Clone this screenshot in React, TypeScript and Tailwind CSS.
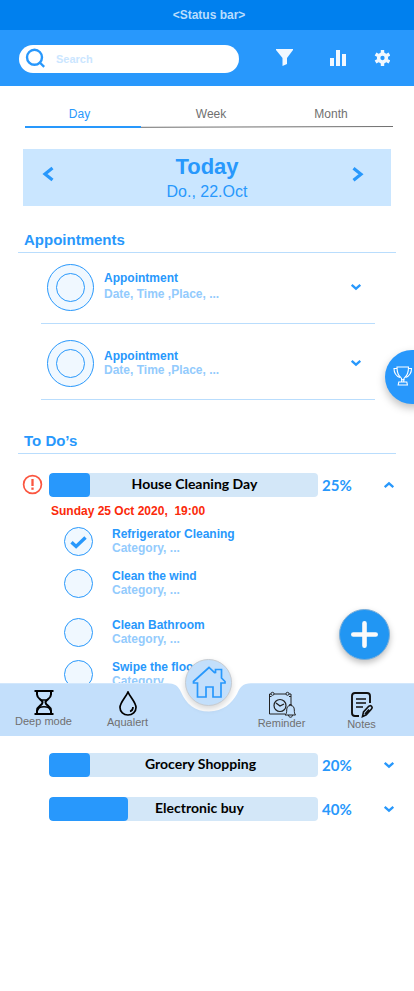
import React from "react";

const sans = "font-['Liberation_Sans',Arial,sans-serif]";
const lato = "font-['Lato',sans-serif]";

function Chevron({ dir, className = "" }: { dir: "up" | "down"; className?: string }) {
  return (
    <svg width="12" height="8" viewBox="0 0 12 8" fill="none" stroke="#2898fc" strokeWidth="2.3" className={className}>
      <path d={dir === "down" ? "M1.7 1.8 6 5.7 10.3 1.8" : "M1.7 6.2 6 2.3 10.3 6.2"} />
    </svg>
  );
}

function BannerArrow({ flip = false }: { flip?: boolean }) {
  return (
    <svg className="-mt-[7px]" width="12" height="16" viewBox="0 0 12 16" fill="none" stroke="#2898fc" strokeWidth="3.200">
      <path d={flip ? "M1.5 2.300 9 8.300 1.5 14.300" : "M10.500 2 3 8 10.500 14"} />
    </svg>
  );
}

function TrophyIcon() {
  return (
    <svg width="20" height="20" viewBox="0 0 20 20" fill="none" stroke="#fff" strokeWidth="1.100">
      <path d="M4 1h11.500c0 5-.8 8.200-3.700 10.400-.8.600-1 1.200-1 2.300H8.700c0-1.100-.1-1.700-1-2.300C4.800 9.200 4 6 4 1Z" />
      <path d="M4 2.500H1c0 4.200 1.800 7.400 6 9M15.500 2.500h3c0 4.200-1.800 7.400-6 9" />
      <path d="M8.700 13v3M10.800 13v3M5.800 16h8l.6 3H5.200Z" />
    </svg>
  );
}

function Header() {
  return (
    <header className="flex h-14 bg-[#2898fc] pl-[19px] pt-[15px]">
      <div className="flex h-7 w-[220px] items-center rounded-full bg-white pl-[6px]">
        <svg className="-mt-px" width="21" height="21" viewBox="0 0 21 21" fill="none" stroke="#2898fc" strokeWidth="2.400">
          <circle cx="9.500" cy="9.300" r="7.500" />
          <path d="m14.700 14.500 4.500 4.300" />
        </svg>
        <span className="ml-[10px] text-[11px] font-bold text-[#cbe6ff]">Search</span>
      </div>
      <svg className="ml-[37px] mt-1" width="17" height="18" viewBox="0 0 17 18" fill="#f1f8ff">
        <path d="M0 0h17v1l-6 8v6l-4.500 2V9L0 1Z" />
      </svg>
      <svg className="ml-[37px] mt-1" width="16" height="18" viewBox="0 0 16 18" fill="#f1f8ff">
        <path d="M0 9h4v8H0ZM6 1h4v16H6ZM12 5h4v12h-4Z" />
      </svg>
      <svg className="ml-[28px] mt-[5px]" width="16" height="16" viewBox="0 0 16 16" fill="none" stroke="#f1f8ff">
        <circle cx="8.500" cy="8" r="3.900" strokeWidth="3.500" />
        <g strokeWidth="3.400">
          <path d="M8.500 3V0M8.500 13v3" />
          <path transform="rotate(60 8.500 8)" d="M8.500 3V0M8.500 13v3" />
          <path transform="rotate(120 8.500 8)" d="M8.500 3V0M8.500 13v3" />
        </g>
      </svg>
    </header>
  );
}

function Tabs() {
  return (
    <nav className="ml-[25px] h-[63px] w-[368px] pt-5 text-xs leading-4 text-[#707070]">
      <div className="flex h-5">
        <span className="w-[109px] text-center text-[#2898fc]">Day</span>
        <span className="ml-10 w-[74px] text-center">Week</span>
        <span className="ml-[46px] w-[74px] text-center">Month</span>
      </div>
      <div className="flex h-[2px]">
        <div className="w-[116px] bg-[#2898fc]" />
        <svg width="252" height="2" viewBox="0 0 252 2">
          <path d="M0 1.300 252 .5" stroke="#707070" strokeWidth="1" />
        </svg>
      </div>
    </nav>
  );
}

function Appointment({ className, textClass, detailClass }: { className: string; textClass: string; detailClass: string }) {
  return (
    <div className={`ml-[41px] flex w-[334px] border-b border-[#b9ddfd] pl-[6px] ${className}`}>
      <div className="flex size-[47px] items-center justify-center rounded-full border border-[#2898fc] bg-[#f0f8ff]">
        <div className="size-[29px] rounded-full border border-[#2898fc]" />
      </div>
      <div className={`ml-[10px] w-[242px] text-xs font-bold leading-[14px] ${textClass}`}>
        <p className="text-[#2898fc]">Appointment</p>
        <p className={`text-[#93cbfd] ${detailClass}`}>Date, Time ,Place, ...</p>
      </div>
      <Chevron dir="down" className="ml-1 mt-[19px]" />
    </div>
  );
}

type ProgressProps = { title: string; percent: string; fill: string; inset: string; open?: boolean; alert?: boolean };

function ProgressRow({ title, percent, fill, inset, open = false, alert = false }: ProgressProps) {
  return (
    <div className="flex h-6 items-center">
      <div className="w-[49px] pl-[22px]">
        {alert && (
          <svg className="-mt-[2px]" width="21" height="21" viewBox="0 0 21 21" fill="none" stroke="#fb5640" strokeWidth="1.700">
            <circle cx="10.500" cy="10.500" r="8.900" />
            <path d="M10.500 5v7" strokeWidth="2.300" />
            <path d="M10.500 13.500v2.300" strokeWidth="2.300" />
          </svg>
        )}
      </div>
      <div className="grid h-6 w-[269px] overflow-hidden rounded-[4px] bg-[#d3e7f8]">
        <div className={`col-start-1 row-start-1 rounded-[4px] bg-[#2898fc] ${fill}`} />
        <span className={`col-start-1 row-start-1 text-center text-[14px] font-bold leading-[22px] text-black ${inset} ${lato}`}>{title}</span>
      </div>
      <span className={`ml-1 w-[61px] text-[15px] font-bold leading-6 text-[#2898fc] ${lato}`}>{percent}</span>
      <Chevron dir={open ? "up" : "down"} />
    </div>
  );
}

function Task({ title, className, done = false }: { title: string; className: string; done?: boolean }) {
  return (
    <div className={`ml-16 flex shrink-0 items-start ${className}`}>
      <div className="flex size-[29px] items-center justify-center rounded-full border border-[#2898fc] bg-[#f0f8ff]">
        {done && (
          <svg width="17" height="14" viewBox="0 0 17 14" fill="none" stroke="#2898fc" strokeWidth="3.400">
            <path d="m1.500 7.300 4.600 4.200L15.500 2.500" />
          </svg>
        )}
      </div>
      <div className="ml-[19px] text-xs font-bold leading-[14px]">
        <p className="text-[#2898fc]">{title}</p>
        <p className="text-[#93cbfd]">Category, ...</p>
      </div>
    </div>
  );
}

function BottomNav() {
  return (
    <div className="relative z-10 h-[53px] text-[11px] leading-[14px] text-[#707070]">
      <svg className="absolute inset-0" width="414" height="53" viewBox="0 0 414 53">
        <path fill="#c3dffb" d="M0 .3H167C175 .3 178 3 181 9 186 21 195 28.500 209 28.500S232 20 237 11C240 4 243 .3 251 .3H414V53H0Z" />
      </svg>
      <div className="relative flex">
        <div className="ml-[15px] flex w-[57px] flex-col items-center whitespace-nowrap pt-[7px]">
          <svg width="20" height="25" viewBox="0 0 20 25" fill="none" stroke="#000" strokeWidth="2">
            <path d="M.5 1h19M.5 24h19M3 1v3.500c0 4.500 5.500 5 5.500 8S3 16 3 20.500V24M17 1v3.500c0 4.500-5.500 5-5.500 8s5.500 3.500 5.500 8V24" />
            <path strokeWidth="1.300" d="M7 10h6M4 20.500c0-5 12-5 12 0" />
          </svg>
          <span className="-mt-px">Deep mode</span>
        </div>
        <div className="ml-[35px] flex w-[41px] flex-col items-center pt-2">
          <svg width="18" height="25" viewBox="0 0 18 25" fill="none" stroke="#000" strokeWidth="1.700">
            <path d="M9 1C7 6 1 11.500 1 16.500c0 4.500 3.500 7.500 8 7.500s8-3 8-7.500C17 11.500 11 6 9 1Z" />
            <path d="M14 16c0 2.500-1.500 4-3 4.500" />
          </svg>
          <span className="-mt-px">Aqualert</span>
        </div>
        <div className="ml-[110px] flex w-[47px] flex-col items-center pt-2">
          <svg width="28" height="27" viewBox="0 0 28 27" fill="none" stroke="#222" strokeWidth="1">
            <path d="M3 3H1.500v20H17M21 3h2v10M6 3h12M1.500 5.500h2M21 5.500h2" />
            <circle cx="4.500" cy="2.800" r="1.500" />
            <circle cx="19.500" cy="2.800" r="1.500" />
            <circle cx="12" cy="14.500" r="6" strokeWidth="1.200" />
            <path d="m8 12 4 3 4-2" strokeWidth="1.300" />
            <path fill="#c3dffb" d="M17 24c1.500-1.500 1.700-2.500 1.700-5 0-3 1.300-4.500 3.800-4.500s3.800 1.500 3.800 4.500c0 2.500.2 3.500 1.200 5ZM20.500 24c0 3 4 3 4 0M21.500 14.500v-1h2v1" />
          </svg>
          <span className="-mt-[2px]">Reminder</span>
        </div>
        <div className="ml-[42px] flex w-[29px] flex-col items-center pt-[9px]">
          <svg width="22" height="26" viewBox="0 0 22 26" fill="none" stroke="#111" strokeWidth="1.900">
            <path d="M8 24H4c-2 0-3-1-3-3V4c0-2 1-3 3-3h12c2 0 3 1 3 3v7" />
            <path strokeWidth="1.600" d="M5 7h10M5 11h10M5 15h7" />
            <path strokeWidth="1.600" d="m11.500 24.500 1-4.500 5-5.500c1-1.100 2.300-1 3-.3s.8 2-.2 3.100l-5 5.500ZM14 22l4-4.500" />
          </svg>
          <span className="-mt-px">Notes</span>
        </div>
      </div>
      <div className="absolute left-[185px] top-[-24px] flex size-[47px] items-center justify-center rounded-full border border-[#c6cbd1] bg-[#c3dffb] shadow-[0_3px_6px_rgba(0,0,0,0.160)]">
        <svg width="34" height="33" viewBox="0 0 34 33" fill="none" stroke="#2898fc" strokeWidth="1.700">
          <path d="M17 1.500 1.500 15.500v1.500h4v14h8.500V21h7v10h8V17h4v-1.500L29.500 12V3.500h-6V6.500l-1 .2Z" />
        </svg>
      </div>
    </div>
  );
}

export default function App() {
  return (
    <div className={`relative h-[991px] w-[414px] overflow-hidden bg-white ${sans}`}>
      <div className="h-[30px] bg-[#0080ee] pl-1 text-center text-xs font-bold leading-[30px] text-[#b9ddfd]">&lt;Status bar&gt;</div>
      <Header />
      <Tabs />
      <section className="ml-[23px] flex h-[57px] w-[368px] items-center justify-between bg-[#cae6ff] pl-[19px] pr-[27px] text-[#2898fc]">
        <BannerArrow />
        <div className="pl-2 pt-[3px] text-center">
          <h1 className="text-[22px] font-bold leading-[26px]">Today</h1>
          <p className="text-base leading-6">Do., 22.Oct</p>
        </div>
        <BannerArrow flip />
      </section>

      <h2 className="ml-[18px] mt-[26px] h-[21px] w-[378px] border-b border-[#b9ddfd] pl-[6px] text-[15px] font-bold leading-4 text-[#2898fc]">Appointments</h2>
      <Appointment className="h-[71px] pt-[11px]" textClass="pt-[7px]" detailClass="mt-[2px]" />
      <Appointment className="h-[76px] pt-4" textClass="pt-[9px]" detailClass="" />

      <h2 className="ml-[18px] mt-[33px] h-[21px] w-[378px] border-b border-[#b9ddfd] pl-[6px] text-[15px] font-bold leading-4 text-[#2898fc]">To Do’s</h2>
      <section className="h-[229px] overflow-hidden pt-[19px]">
        <ProgressRow title="House Cleaning Day" percent="25%" fill="w-[41px]" inset="pl-[22px]" open alert />
        <p className="ml-[51px] mt-[7px] h-[23px] whitespace-pre text-xs font-bold leading-[14px] text-[#fb2a0a]">{"Sunday 25 Oct 2020,  19:00"}</p>
        <Task title="Refrigerator Cleaning" className="h-[42px]" done />
        <Task title="Clean the wind" className="h-[49px]" />
        <Task title="Clean Bathroom" className="h-[42px]" />
        <Task title="Swipe the floor" className="h-[42px]" />
      </section>

      <BottomNav />
      <section className="flex flex-col gap-5 pt-[17px]">
        <ProgressRow title="Grocery Shopping" percent="20%" fill="w-[41px]" inset="pl-[34px]" />
        <ProgressRow title="Electronic buy" percent="40%" fill="w-[79px]" inset="pl-[32px]" />
      </section>

      <button className="absolute left-[385px] top-[350px] flex size-[54px] items-center rounded-full bg-[#2898fc] pb-[3px] pl-[8px] shadow-[0_4px_8px_rgba(0,0,0,0.250)]" aria-label="Trophies">
        <TrophyIcon />
      </button>
      <button className="absolute left-[339px] top-[609px] flex size-[51px] items-center justify-center rounded-full border border-[#79aeda] bg-[#2196f3] shadow-[0_3px_6px_rgba(0,0,0,0.250)]" aria-label="Add">
        <svg width="27" height="27" viewBox="0 0 27 27" stroke="#fafafa" strokeWidth="4.600" strokeLinecap="round">
          <path d="M13.500 2.300v22.400M2.300 13.500h22.400" />
        </svg>
      </button>
    </div>
  );
}
